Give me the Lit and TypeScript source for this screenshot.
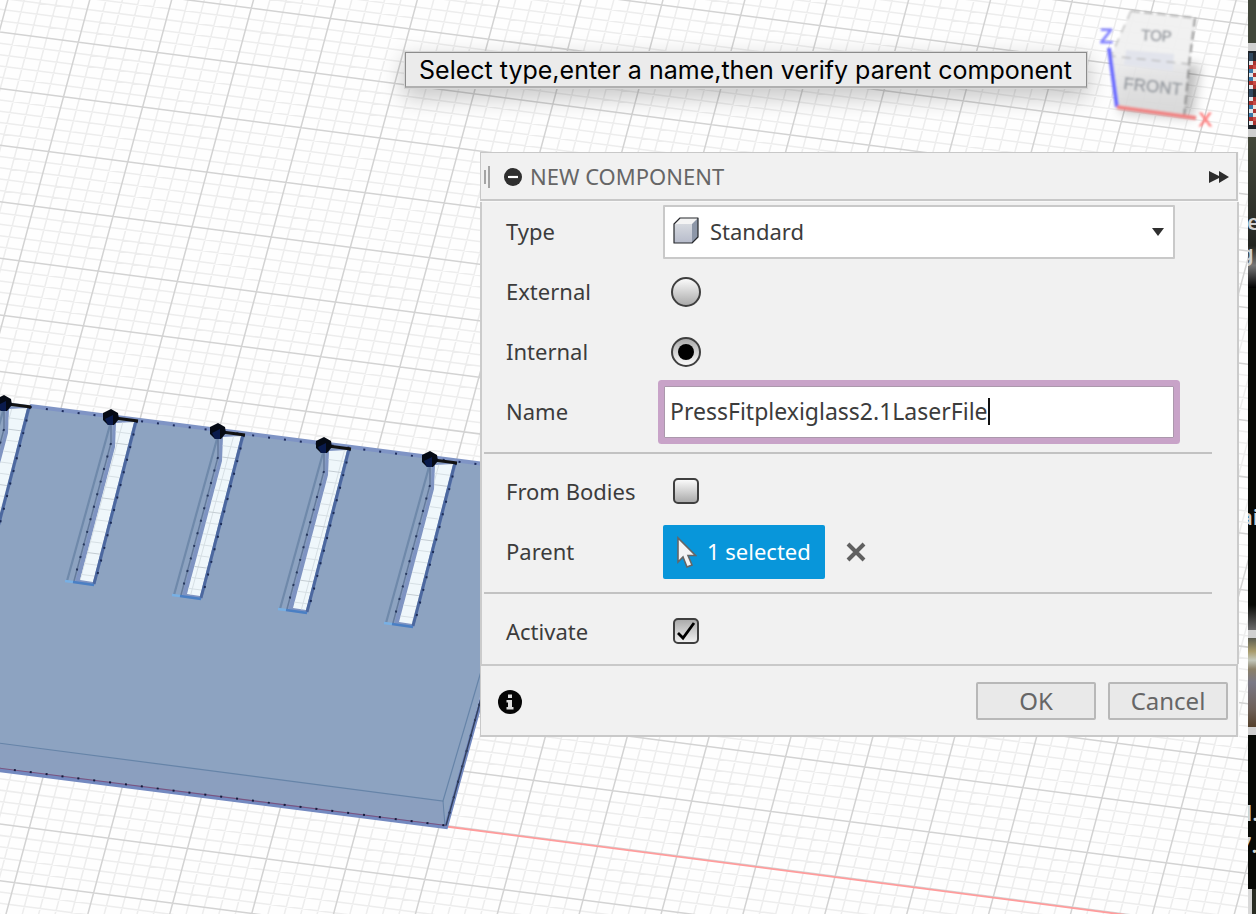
import { LitElement, html, svg, css } from "lit";
import { customElement, state } from "lit/decorators.js";

type Point = [number, number];

const gridPoint = (i: number, j: number): Point => [
  78.3 + 79.1 * i - 14.8 * j,
  42.2 + 10.3 * i + 54.65 * j,
];

const gridPath = (major: boolean): string => {
  const parts: string[] = [];
  const line = (a: Point, b: Point) =>
    parts.push(`M${a.map((n) => n.toFixed(1)).join(" ")}L${b.map((n) => n.toFixed(1)).join(" ")}`);
  for (let k = -25; k <= 100; k++) {
    if ((k % 5 === 0) !== major) continue;
    line(gridPoint(-4, k / 5), gridPoint(22, k / 5));
    line(gridPoint(k / 5, -6), gridPoint(k / 5, 20));
  }
  return parts.join("");
};

const MAJOR = gridPath(true);
const MINOR = gridPath(false);

const SLOTS: Point[] = [[4, 403], [111, 417], [218, 431], [324, 445], [430, 459]];

@customElement("model-canvas")
export class ModelCanvas extends LitElement {
  static styles = css`
    :host { display: block; }
    svg { display: block; width: 100%; height: 100%; }
  `;

  private slotShape([x, y]: Point) {
    const p = (dx: number, dy: number) => `${x + dx} ${y + dy}`;
    return svg`
      <path d="M${p(2, 4)}L${p(27, 4)}L${p(-16, 168)}L${p(-36, 165)}L${p(1, 28)}Z" fill="#7f94c2"/>
      <path d="M${p(5, 6)}L${p(23, 5)}L${p(-18, 165)}L${p(-31, 163)}L${p(4, 30)}Z" fill="#eff7fb"/>
      <path clip-path="url(#slot-${x})" d=${MINOR} stroke="#d6dfe4" fill="none"/>
      <path clip-path="url(#slot-${x})" d=${MAJOR} stroke="#c3ccd2" fill="none"/>
      <clipPath id="slot-${x}"><path d="M${p(5, 6)}L${p(23, 5)}L${p(-18, 165)}L${p(-31, 163)}L${p(4, 30)}Z"/></clipPath>
      <path d="M${p(-1, 8)}L${p(-44, 164)}" stroke="#6f89aa" stroke-width="2.2" fill="none"/>
      <path d="M${p(0, 4)}L${p(0, 26)}L${p(-37, 164)}" stroke="#647a9c" stroke-width="1.5" fill="none"/>
      <path d="M${p(0, 26)}L${p(-37, 164)}" stroke="#26365c" stroke-width="2" stroke-dasharray="2 11" fill="none"/>
      <path d="M${p(25, 4)}L${p(-17, 167)}" stroke="#4c689f" stroke-width="3" fill="none"/>
      <path d="M${p(26, 4)}L${p(-16, 167)}" stroke="#1b2b56" stroke-width="2" stroke-dasharray="2 11" fill="none"/>
      <path d="M${p(-46, 164)}L${p(-38, 165)}" stroke="#78b0e4" stroke-width="2.5"/>
      <path d="M${p(-38, 165)}L${p(-17, 168)}" stroke="#4a7fc4" stroke-width="2.5"/>
      <path d="M${p(4, 1)}L${p(27, 4)}" stroke="#111" stroke-width="2.8"/>
      <path d="M${p(-8, -4)}L${p(0, -8)}L${p(7, -4)}L${p(8, 2)}L${p(3, 8)}L${p(-3, 8)}L${p(-8, 3)}Z" fill="#050a14"/>
      <path d="M${p(-6, 2)}L${p(2, -2)}L${p(2, 8)}L${p(-3, 8)}Z" fill="#0a1b4c"/>
    `;
  }

  render() {
    return html`
      <svg viewBox="0 0 1256 914" preserveAspectRatio="xMinYMin slice" aria-hidden="true">
        <rect width="1256" height="914" fill="#fefefe"/>
        <path d=${MINOR} stroke="#ededed" stroke-width="1.5" fill="none"/>
        <path d=${MAJOR} stroke="#d3d3d3" stroke-width="1.5" fill="none"/>
        <path d="M446 826.5L1130 915.5" stroke="#ff9c9c" stroke-width="1.8"/>
        <path d="M-2 401L500 466L500 620L446 828L-2 770Z" fill="#8da3c1"/>
        <path d="M-2 743L443 801L446 827L-2 769Z" fill="#8b9fbf"/>
        <path d="M-2 743L443 801L482 668" stroke="#6684a8" stroke-width="1.2" fill="none"/>
        <path d="M443 801L445 826" stroke="#6684a8" fill="none"/>
        <path d="M-2 770L446 827L484 690" stroke="#7389c0" stroke-width="4" fill="none"/>
        <path d="M-2 768L446 825.5" stroke="#7a5580" stroke-width="1.2"/>
        <path d="M-2 768L446 825.5L482 695" stroke="#151c3c" stroke-width="2" stroke-dasharray="2 14" fill="none"/>
        <path d="M446 825.5L482 695" stroke="#33415f" stroke-width="1.5"/>
        <path d="M30 406L500 466" stroke="#7f94c5" stroke-width="4"/>
        <path d="M30 407L500 467" stroke="#1d2c5c" stroke-width="2" stroke-dasharray="2 14"/>
        ${SLOTS.map((s) => this.slotShape(s))}
      </svg>
    `;
  }
}

@customElement("view-cube")
export class ViewCube extends LitElement {
  static styles = css`
    :host { display: block; width: 136px; height: 140px; }
    svg { display: block; }
    text { font-family: "Liberation Sans", Arial, sans-serif; }
    .face { font-size: 17px; fill: #989ca2; stroke: #989ca2; stroke-width: 0.5px; }
    .top { font-size: 15px; }
    .axis { font-size: 21px; stroke-width: 1px; }
    .z { fill: #8181ff; stroke: #8181ff; }
    .x { fill: #ff8585; stroke: #ff8585; font-size: 19px; }
  `;

  render() {
    return html`
      <svg width="136" height="140" viewBox="1090 0 136 140" role="img" aria-label="View cube">
        <defs>
          <filter id="soft" x="-30%" y="-30%" width="160%" height="160%"><feGaussianBlur stdDeviation="6"/></filter>
          <filter id="fine"><feGaussianBlur stdDeviation="0.8"/></filter>
          <linearGradient id="front" x1="0" y1="0" x2="0" y2="1">
            <stop offset="0" stop-color="#ededee"/><stop offset="1" stop-color="#dadada"/>
          </linearGradient>
        </defs>
        <path d="M1122 70L1200 64L1192 118L1120 112Z" fill="#000" opacity="0.25" filter="url(#soft)"/>
        <g filter="url(#fine)">
          <path d="M1131 11L1195 18L1189 64L1111 56Z" fill="#f0f0f0" opacity="0.95"/>
          <path d="M1111 56L1189 64L1184 116L1117 107Z" fill="url(#front)" opacity="0.92"/>
          <path d="M1126 50L1174 54L1173 71L1124 65Z" fill="#e2e4ec"/>
          <path d="M1131 11L1195 18" fill="none" stroke="#a8a8a8" stroke-width="1.6" stroke-dasharray="9 4"/>
          <path d="M1195 18L1189 64L1184 116" fill="none" stroke="#8d8d8d" stroke-width="2" stroke-dasharray="9 4"/>
          <path d="M1131 11L1111 56L1189 64" fill="none" stroke="#b8b8b8" stroke-width="1.4" stroke-dasharray="9 6"/>
          <path d="M1109 48L1117 107" stroke="#6c6cff" stroke-width="4"/>
          <path d="M1117 107L1196 118" stroke="#f08585" stroke-width="4"/>
          <text class="face top" x="1141" y="40" transform="rotate(3 1141 40)">TOP</text>
          <text class="face" x="1123" y="89" transform="rotate(6 1123 89)">FRONT</text>
          <text class="axis z" x="1100" y="43">Z</text>
          <text class="axis x" x="1199" y="126">X</text>
        </g>
      </svg>
    `;
  }
}

@customElement("window-edge")
export class WindowEdge extends LitElement {
  static styles = css`
    :host { display: block; width: 8px; background: #080a06; overflow: hidden; }
    text { font-family: "Noto Sans", sans-serif; font-size: 22px; font-weight: 600; fill: #d2d2d2; }
    svg { display: block; }
  `;

  private mosaic() {
    const colors = ["#31485f", "#c94a45", "#dfe5ea", "#3877a8", "#22262c", "#b9c6d2", "#a9332f", "#e8e1d8", "#5a9bc6"];
    return Array.from({ length: 36 }, (_, n) => {
      const col = n % 2;
      const row = Math.floor(n / 2);
      return svg`<rect x=${1 + col * 4} y=${53 + row * 4} width="4" height="4" fill=${colors[(n * 4 + row * row) % 9]}/>`;
    });
  }

  render() {
    return html`
      <svg width="8" height="914" viewBox="0 0 8 914" aria-hidden="true">
        <defs>
          <linearGradient id="upper" x1="0" y1="0" x2="0" y2="1">
            <stop offset="0" stop-color="#434739"/><stop offset="0.6" stop-color="#2b2d28"/>
            <stop offset="0.72" stop-color="#22241f"/><stop offset="0.85" stop-color="#777"/><stop offset="1" stop-color="#000"/>
          </linearGradient>
          <linearGradient id="photo" x1="0" y1="0" x2="0" y2="1">
            <stop offset="0" stop-color="#5b5c50"/><stop offset="0.15" stop-color="#a89b6c"/>
            <stop offset="0.25" stop-color="#c4c8bc"/><stop offset="0.35" stop-color="#8b8069"/>
            <stop offset="0.5" stop-color="#7a7885"/><stop offset="0.8" stop-color="#6d6058"/><stop offset="1" stop-color="#54402b"/>
          </linearGradient>
          <linearGradient id="fade" x1="0" y1="0" x2="0" y2="1">
            <stop offset="0" stop-color="#080a06"/><stop offset="1" stop-color="#6b6b6b"/>
          </linearGradient>
        </defs>
        <rect width="8" height="43" fill="#41463a"/>
        <rect y="43" width="8" height="94" fill="#cfcfcf"/>
        <rect y="51" width="8" height="78" fill="#1c2127"/>
        ${this.mosaic()}
        <rect y="137" width="8" height="151" fill="url(#upper)"/>
        <text x="-1" y="230">e</text>
        <text x="-8" y="261">g</text>
        <text x="-8" y="525">ai</text>
        <rect y="605" width="8" height="25" fill="url(#fade)"/>
        <rect y="630" width="8" height="105" fill="#d0d0d0"/>
        <rect y="638" width="8" height="89" fill="url(#photo)"/>
        <text x="-2" y="821">l.</text>
        <text x="-9" y="853">7.</text>
        <rect y="889" width="4" height="25" fill="#d8d8d8"/>
        <rect x="4" y="889" width="4" height="25" fill="#2a2d24"/>
      </svg>
    `;
  }
}

@customElement("component-dialog")
export class ComponentDialog extends LitElement {
  @state() private name = "PressFitplexiglass2.1LaserFile";

  static styles = css`
    :host {
      display: block;
      font-family: "Noto Sans", "Open Sans", sans-serif;
      font-size: 22px;
      line-height: 30px;
      color: #3c3c3c;
    }
    * { box-sizing: border-box; }
    button, input, select { font: inherit; color: inherit; margin: 0; }
    button { cursor: pointer; }
    .header {
      display: flex; align-items: center;
      height: 49px; padding: 0 7px 0 3px; margin-right: 1px;
      background: #f1f1f1;
      border: 1px solid #c8c8c8; border-bottom-width: 2px; border-right-width: 2px;
    }
    .header .round { padding-top: 2px; }
    .grip { width: 6px; height: 24px; padding-top: 2px; margin-right: 14px; }
    .round { border: 0; padding: 0; background: none; display: grid; }
    .title { font-size: 22px; line-height: 30px; font-weight: 400; color: #666; margin: 0 auto 0 8px; }
    .body {
      margin-top: 1px; padding-bottom: 2px;
      background: #f1f1f1; border: solid #cbcbcb; border-width: 0 2px;
    }
    .row { display: grid; grid-template-columns: 157px 1fr; align-items: center; height: 60px; padding: 0 62px 0 24px; }
    .row > label { padding-bottom: 2px; }
    .rule { height: 2px; border: 0; margin: 10px 25px 8px 2px; background: #c2c2c2; }
    .select { display: grid; grid-template-columns: 10px 26px 1fr 12px 11px; align-items: center; height: 54px; }
    .select select {
      grid-area: 1 / 1 / 2 / -1; appearance: none; width: 100%; height: 54px;
      border: 2px solid #c9c9c9; border-radius: 1px; background: #fff; padding: 0 30px 2px 45px;
    }
    .select svg { grid-row: 1; pointer-events: none; z-index: 1; }
    .cube { grid-column: 2; }
    .arrow { grid-column: 4; }
    .radio, .check {
      appearance: none; border: 2px solid #3f3f3f; display: grid; place-items: center;
      background: linear-gradient(#fafafa, #ababab);
    }
    .radio { width: 30px; height: 30px; margin-left: 8px; border-radius: 50%; }
    .radio:checked { background: linear-gradient(#ababab, #fafafa); }
    .radio:checked::before { content: ""; width: 16px; height: 16px; border-radius: 50%; background: #000; }
    .check { width: 26px; height: 26px; border-radius: 5px; grid-area: 1 / 1; }
    .check:checked { background: linear-gradient(#ababab, #f0f0f0); }
    .tick { grid-area: 1 / 1; pointer-events: none; visibility: hidden; }
    .check:checked + .tick { visibility: visible; }
    .box { display: grid; width: 26px; margin-left: 10px; padding-bottom: 2px; }
    .name {
      display: flex; align-items: center; height: 52px; margin: 0 1px; padding: 0 5px 2px;
      background: #fff; border: 1px solid #ab98ac; box-shadow: 0 0 0 6px #c8a3c8; border-radius: 1px;
    }
    .name input { field-sizing: content; font-size: 23px; max-width: 100%; border: 0; outline: 0; padding: 0; background: none; caret-color: transparent; }
    .caret { width: 2px; height: 27px; background: #111; }
    .parent { display: flex; align-items: center; gap: 21px; }
    .chip {
      display: flex; align-items: center; gap: 10px; height: 54px; width: 162px; padding: 0 0 0 14px;
      border: 0; border-radius: 2px; background: #0896da; color: #fff; white-space: nowrap;
    }
    .chip span { padding-bottom: 2px; }
    .footer {
      display: flex; align-items: center; gap: 12px;
      height: 73px; padding: 0 8px 0 17px; margin-right: 1px;
      background: #f1f1f1; border: solid #c9c9c9; border-width: 2px 2px 2px 1px;
    }
    .info { margin-right: auto; padding-top: 2px; }
    .action {
      width: 120px; height: 38px; padding: 0; font-size: 24px; line-height: 30px; color: #666;
      background: #e9e9e9; border: 2px solid #b8b8b8; border-radius: 2px;
    }
  `;

  render() {
    return html`
      <form role="dialog" aria-label="New component" @submit=${(e: Event) => e.preventDefault()}>
        <div class="header">
          <svg class="grip" viewBox="0 0 6 22" aria-hidden="true"><path d="M1 4V18M5 0V22" stroke="#8a8a8a" stroke-width="1.5"/></svg>
          <button class="round" type="button" aria-label="Collapse">
            <svg width="18" height="18" viewBox="0 0 18 18"><circle cx="9" cy="9" r="9" fill="#2f2f2f"/><path d="M4 9H14" stroke="#fff" stroke-width="2.2"/></svg>
          </button>
          <h2 class="title">NEW COMPONENT</h2>
          <button class="round" type="button" aria-label="Expand">
            <svg width="20" height="12" viewBox="0 0 20 12"><path d="M0 0L10 5V0L20 6L10 12V7L0 12Z" fill="#2d2d2d"/></svg>
          </button>
        </div>
        <div class="body">
          <div class="row">
            <label for="type">Type</label>
            <div class="select">
              <select id="type"><option>Standard</option></select>
              <svg class="cube" width="26" height="30" viewBox="0 0 26 30" aria-hidden="true">
                <defs><linearGradient id="cf" x1="0" y1="0" x2="0" y2="1"><stop offset="0" stop-color="#d6d9df"/><stop offset="1" stop-color="#b7bccb"/></linearGradient></defs>
                <path d="M1 7L7 1H25V20L19 26H1Z" fill="#f4f4f4"/>
                <path d="M1 7H19V26H1Z" fill="url(#cf)"/>
                <path d="M19 7L25 1V20L19 26Z" fill="#8d97a8"/>
                <path d="M1 7L7 1H25V20L19 26H1Z" fill="none" stroke="#26282c" stroke-width="1.2" stroke-linejoin="round"/>
              </svg>
              <svg class="arrow" width="12" height="8" viewBox="0 0 12 8" aria-hidden="true"><path d="M0 0H12L6 8Z" fill="#2f2f2f"/></svg>
            </div>
          </div>
          <div class="row">
            <label for="external">External</label>
            <input class="radio" id="external" type="radio" name="storage">
          </div>
          <div class="row">
            <label for="internal">Internal</label>
            <input class="radio" id="internal" type="radio" name="storage" checked>
          </div>
          <div class="row">
            <label for="name">Name</label>
            <div class="name">
              <input id="name" type="text" spellcheck="false" .value=${this.name}
                @input=${(e: Event) => { this.name = (e.target as HTMLInputElement).value; }}>
              <span class="caret"></span>
            </div>
          </div>
          <hr class="rule">
          <div class="row">
            <label for="bodies">From Bodies</label>
            <span class="box">
              <input class="check" id="bodies" type="checkbox">
              <svg class="tick" width="26" height="26" viewBox="0 0 26 26" aria-hidden="true"><path d="M5 15L10 20L21 5" fill="none" stroke="#000" stroke-width="2.8"/></svg>
            </span>
          </div>
          <div class="row">
            <label for="parent">Parent</label>
            <div class="parent">
              <button class="chip" id="parent" type="button">
                <svg width="20" height="32" viewBox="0 0 20 32" aria-hidden="true"><path d="M1 2V26L6 21L10 31L15 29L11 19.500H18.500Z" fill="#f4f4f4" stroke="#666" stroke-width="1.6"/></svg>
                <span>1 selected</span>
              </button>
              <button class="round" type="button" aria-label="Clear selection">
                <svg width="20" height="20" viewBox="0 0 20 20"><path d="M2 2L18 18M18 2L2 18" stroke="#606060" stroke-width="4"/></svg>
              </button>
            </div>
          </div>
          <hr class="rule">
          <div class="row">
            <label for="activate">Activate</label>
            <span class="box">
              <input class="check" id="activate" type="checkbox" checked>
              <svg class="tick" width="26" height="26" viewBox="0 0 26 26" aria-hidden="true"><path d="M5 15L10 20L21 5" fill="none" stroke="#000" stroke-width="2.8"/></svg>
            </span>
          </div>
        </div>
        <div class="footer">
          <button class="round info" type="button" aria-label="Information">
            <svg width="24" height="24" viewBox="0 0 24 24"><circle cx="12" cy="12" r="12" fill="#050505"/><path d="M10 4.500H14V8H10ZM8.500 10H14V17H15.500V19.500H8.500V17H10V12.500H8.500Z" fill="#ddd"/></svg>
          </button>
          <button class="action" type="submit">OK</button>
          <button class="action" type="button">Cancel</button>
        </div>
      </form>
    `;
  }
}

@customElement("app-root")
export class AppRoot extends LitElement {
  static styles = css`
    :host { display: grid; grid-template-columns: 1fr 8px; position: relative; min-height: 100vh; overflow: hidden; background: #fefefe; }
    .scene { grid-area: 1 / 1; position: relative; min-width: 0; overflow: hidden; }
    .canvas { position: absolute; inset: 0 -8px 0 0; }
    .edge { grid-area: 1 / 2; height: 100vh; }
    .cube { position: absolute; top: 0; right: 22px; }
    .hint {
      position: absolute; top: 52px; right: 161px;
      margin: 0; padding: 2px 14px 0 13px; white-space: nowrap;
      font-family: Inter, sans-serif; font-size: 25px; line-height: 31px; color: #000;
      background: #ebebeb; border: 1px solid #8c8c8c; border-bottom: 2px solid #b0b0b0;
      box-shadow: 0 0 0 1px #d6d6d6, 0 8px 22px 2px rgba(0, 0, 0, 0.22);
    }
    .dialog { position: absolute; top: 152px; right: 9px; width: 759px; max-width: 100%; background: #f8f8f8; }
  `;

  render() {
    return html`
      <main class="scene">
        <model-canvas class="canvas"></model-canvas>
        <view-cube class="cube"></view-cube>
        <p class="hint" role="status">Select type,enter a name,then verify parent component</p>
        <component-dialog class="dialog"></component-dialog>
      </main>
      <window-edge class="edge"></window-edge>
    `;
  }
}
